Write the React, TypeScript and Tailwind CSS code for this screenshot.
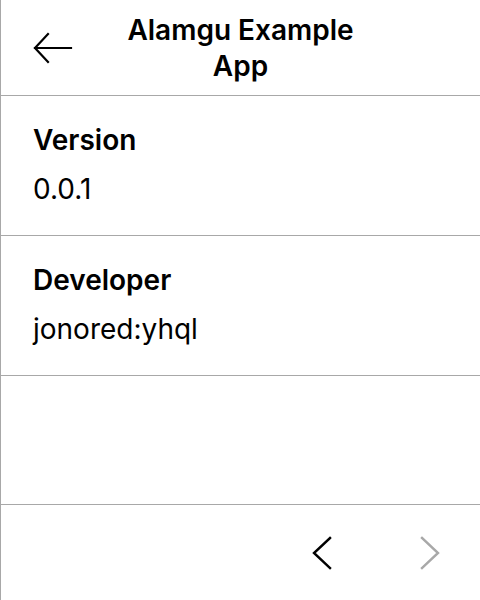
import React from "react";

export default function App() {
  return (
    <div
      className="w-[480px] h-[600px] bg-white flex flex-col border-l border-[#a8a8a8] text-black overflow-hidden"
      style={{ fontFamily: "Inter, 'Noto Sans', sans-serif" }}
    >
      <div className="h-[96px] flex items-center border-b border-[#a8a8a8] shrink-0 relative">
        <div className="absolute left-[32px] top-[32px]">
          <svg width="40" height="32" viewBox="0 0 40 32" fill="none" stroke="black" strokeWidth="2.2" strokeLinecap="square">
            <path d="M2 16 H38" />
            <path d="M15 2 L2 16 L15 30" />
          </svg>
        </div>
        <div className="flex-1 text-center font-semibold text-[28px] leading-[36px] px-[96px]">
          Alamgu Example App
        </div>
      </div>
      <div className="h-[140px] border-b border-[#a8a8a8] px-[32px] pt-[26px] flex flex-col gap-[13px] shrink-0">
        <div className="font-semibold text-[28px] leading-[36px]">Version</div>
        <div className="text-[28px] leading-[36px]">0.0.1</div>
      </div>
      <div className="h-[140px] border-b border-[#a8a8a8] px-[32px] pt-[26px] flex flex-col gap-[13px] shrink-0">
        <div className="font-semibold text-[28px] leading-[36px]">Developer</div>
        <div className="text-[28px] leading-[36px]">jonored:yhql</div>
      </div>
      <div className="h-[129px] border-b border-[#a8a8a8] shrink-0" />
      <div className="flex-1 flex items-center justify-end pr-[38px] gap-[84px]">
        <svg width="24" height="36" viewBox="0 0 24 36" fill="none" stroke="black" strokeWidth="2.4" strokeLinecap="square">
          <path d="M20 3 L4 18 L20 33" />
        </svg>
        <svg width="24" height="36" viewBox="0 0 24 36" fill="none" stroke="#a8a8a8" strokeWidth="2.4" strokeLinecap="square">
          <path d="M4 3 L20 18 L4 33" />
        </svg>
      </div>
    </div>
  );
}
